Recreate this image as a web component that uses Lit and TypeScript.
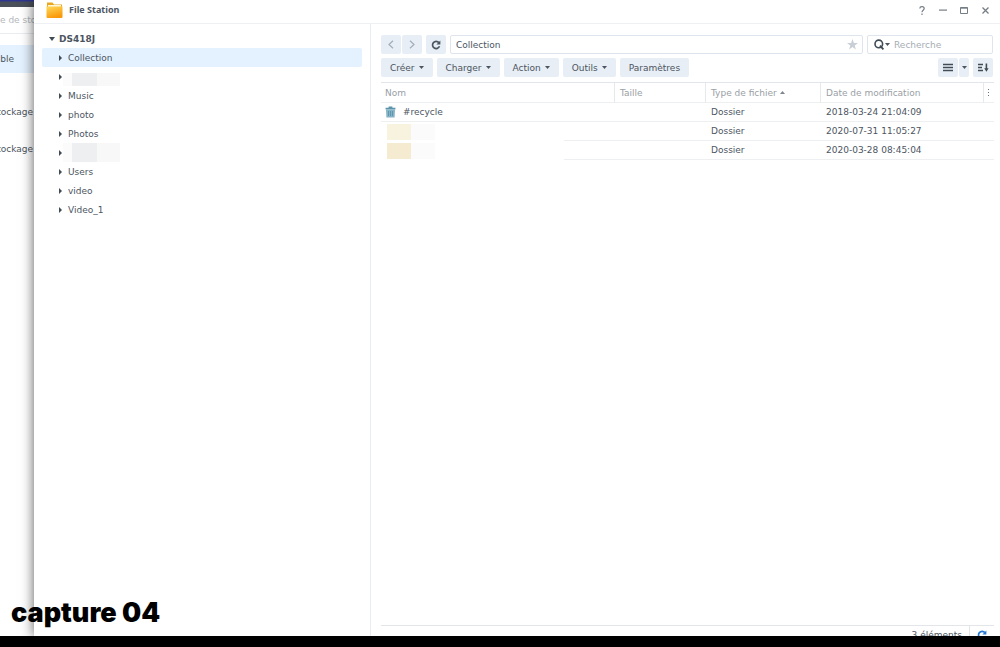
import { LitElement, html, css, svg } from "lit";
import { customElement, property } from "lit/decorators.js";
import { classMap } from "lit/directives/class-map.js";

interface Folder {
  name: string;
  mask?: "short" | "tall";
}

interface Entry {
  name: string;
  type: string;
  date: string;
  mask?: "pale" | "warm";
}

const folders: Folder[] = [
  { name: "Collection" },
  { name: "", mask: "short" },
  { name: "Music" },
  { name: "photo" },
  { name: "Photos" },
  { name: "", mask: "tall" },
  { name: "Users" },
  { name: "video" },
  { name: "Video_1" },
];

const entries: Entry[] = [
  { name: "#recycle", type: "Dossier", date: "2018-03-24 21:04:09" },
  { name: "", type: "Dossier", date: "2020-07-31 11:05:27", mask: "pale" },
  { name: "", type: "Dossier", date: "2020-03-28 08:45:04", mask: "warm" },
];

const menus = ["Créer", "Charger", "Action", "Outils"];

const caretDown = html`<svg class="caret" width="5" height="3" viewBox="0 0 5 3" aria-hidden="true"><path d="M0 0h5L2.5 3z" fill="currentColor" /></svg>`;

const reload = (size: number) => html`<svg width=${size} height=${size} viewBox="0 0 10 10" aria-hidden="true">
  ${svg`<path d="M7.9 2.6A3.6 3.6 0 1 0 8.5 6.3" fill="none" stroke="currentColor" stroke-width="1.7"/><path d="M9.4.6v4H5.4z" fill="currentColor"/>`}
</svg>`;

const base = css`
  * {
    box-sizing: border-box;
  }
  button,
  input {
    font: inherit;
    color: inherit;
    margin: 0;
    padding: 0;
    border: 0;
    background: none;
    outline: 0;
  }
  svg {
    display: block;
    flex: none;
  }
`;

@customElement("folder-tree")
export class FolderTree extends LitElement {
  @property() root = "DS418J";

  static styles = [
    base,
    css`
      :host {
        display: block;
        padding: 5px 8px;
        border-right: 1px solid #e9ecf0;
      }
      .row {
        display: flex;
        align-items: center;
        width: 100%;
        height: 19px;
        padding-left: 17px;
        gap: 6px;
        border-radius: 2px;
        text-align: left;
      }
      .root {
        padding-left: 7px;
        gap: 4px;
        font-weight: bold;
      }
      .selected {
        background: #e4f1fe;
      }
      .mask {
        display: flex;
        width: 57px;
        height: 13px;
        margin-left: -5px;
        padding-left: 9px;
        background: #fbfbfb;
      }
      .mask i {
        width: 25px;
        background: #eeeff0;
      }
      .mask b {
        flex: 1;
        background: #f8f8f8;
      }
      .short {
        align-self: flex-end;
      }
      .tall {
        height: 19px;
      }
    `,
  ];

  render() {
    return html`
      <button class="row root">
        <svg width="6" height="4" viewBox="0 0 6 4"><path d="M0 0h6L3 4z" fill="#414b55" /></svg>
        ${this.root}
      </button>
      ${folders.map(
        (f, i) => html`<button class=${classMap({ row: true, selected: i === 0 })} aria-label=${f.name || "Dossier masqué"}>
          <svg width="3" height="6" viewBox="0 0 3 6"><path d="M0 0v6l3-3z" fill="#414b55" /></svg>
          ${f.mask ? html`<span class="mask ${f.mask}"><i></i><b></b></span>` : f.name}
        </button>`
      )}
    `;
  }
}

@customElement("file-pane")
export class FilePane extends LitElement {
  static styles = [
    base,
    css`
      :host {
        display: flex;
        flex-direction: column;
        min-width: 0;
        padding: 11px 6px 0 10px;
      }
      .bar {
        display: flex;
        height: 19px;
        gap: 4px;
        margin-right: 1px;
      }
      .tools {
        margin: 4px 1px 5px 0;
      }
      .btn {
        display: flex;
        align-items: center;
        justify-content: center;
        gap: 4px;
        padding: 0 9px;
        background: #e8eef5;
        border-radius: 2px;
      }
      .split {
        display: flex;
        gap: 1px;
      }
      .nav,
      .icon {
        width: 20px;
        padding: 0;
      }
      .nav {
        color: #a3adb8;
      }
      .box {
        display: flex;
        align-items: center;
        min-width: 0;
        border: 1px solid #dfe5ec;
        border-radius: 2px;
        padding: 0 4px 0 6px;
      }
      .box input {
        flex: 1;
        min-width: 0;
        height: 17px;
      }
      .path {
        flex: 1;
        padding-left: 5px;
      }
      .search {
        width: 126px;
        gap: 4px;
      }
      .search button {
        display: flex;
        align-items: center;
      }
      input::placeholder {
        color: #a6adb5;
        opacity: 1;
      }
      .menus {
        display: flex;
        flex: 1;
        gap: 4px;
      }
      .drop {
        width: 10px;
        padding: 0;
      }
      table {
        width: 100%;
        table-layout: fixed;
        border-spacing: 0;
        border-top: 1px solid #e2e6ea;
        text-align: left;
      }
      th,
      td {
        height: 19px;
        padding: 0 0 0 4px;
        border-bottom: 1px solid #edeff1;
        white-space: nowrap;
      }
      th {
        height: 20px;
        font-weight: normal;
        color: #9aa0a6;
      }
      th + th {
        border-left: 1px solid #e6e9ec;
        padding-left: 5px;
      }
      td + td {
        padding-left: 6px;
      }
      .size {
        width: 91px;
      }
      .type {
        width: 115px;
      }
      .date {
        width: 163px;
      }
      th.more {
        width: 11px;
        padding-left: 4px;
      }
      .sort,
      .name {
        display: flex;
        align-items: center;
        gap: 3px;
      }
      .name {
        gap: 7px;
      }
      .masked {
        position: relative;
      }
      .mask {
        position: absolute;
        inset: 1px 50px -1px 0;
        padding-left: 6px;
        display: flex;
        background: #fff;
      }
      .mask i {
        width: 24px;
        margin: 1px 0;
      }
      .mask b {
        width: 24px;
        margin: 1px 0;
        background: #fbfbfb;
      }
      .pale i {
        background: #f8f3df;
      }
      .warm i {
        background: #f5ebd0;
      }
      .status {
        display: flex;
        align-items: flex-start;
        justify-content: flex-end;
        height: 11px;
        margin-top: auto;
        border-top: 1px solid #e2e6ea;
        padding-right: 7px;
        gap: 7px;
        line-height: 18px;
        overflow: hidden;
      }
      .status button {
        border-left: 1px solid #e2e6ea;
        padding: 4px 0 4px 7px;
        color: #2478d4;
      }
    `,
  ];

  render() {
    return html`
      <div class="bar">
        <div class="split">
          <button class="btn nav" aria-label="Précédent">
            <svg width="6" height="9" viewBox="0 0 6 9"><path d="M5 .7 1 4.5l4 3.8" fill="none" stroke="currentColor" stroke-width="1.2" /></svg>
          </button>
          <button class="btn nav" aria-label="Suivant">
            <svg width="6" height="9" viewBox="0 0 6 9"><path d="m1 .7 4 3.8-4 3.8" fill="none" stroke="currentColor" stroke-width="1.2" /></svg>
          </button>
        </div>
        <button class="btn icon" aria-label="Actualiser">${reload(10)}</button>
        <label class="box path">
          <input aria-label="Chemin" value="Collection" />
          <svg width="11" height="11" viewBox="0 0 11 11"><path d="m5.5 0 1.4 3.9 4.1.1-3.3 2.5 1.2 4-3.4-2.4-3.4 2.4 1.2-4L0 4l4.1-.1z" fill="#c9cfd6" /></svg>
        </label>
        <div class="box search">
          <button aria-label="Options de recherche">
            <svg width="11" height="11" viewBox="0 0 11 11"><circle cx="4.8" cy="4.9" r="3.8" fill="none" stroke="#414b55" stroke-width="1.6" /><path d="m6 6.6 3.4 3.8" stroke="#414b55" stroke-width="1.8" /></svg>
            ${caretDown}
          </button>
          <input aria-label="Recherche" placeholder="Recherche" />
        </div>
      </div>
      <div class="bar tools">
        <div class="menus">
          ${menus.map((m) => html`<button class="btn">${m}${caretDown}</button>`)}
          <button class="btn">Paramètres</button>
        </div>
        <div class="split">
          <button class="btn icon" aria-label="Affichage en liste">
            <svg width="10" height="9" viewBox="0 0 10 9"><path d="M0 1.5h10M0 4.5h10M0 7.5h10" stroke="#414b55" stroke-width="1.3" /></svg>
          </button>
          <button class="btn drop" aria-label="Modes d'affichage">${caretDown}</button>
        </div>
        <button class="btn icon" aria-label="Trier">
          <svg width="12" height="9" viewBox="0 0 12 9"><path d="M1 1.5h5M1 4.5h4M1 7.5h5" stroke="#414b55" stroke-width="1.3" /><path d="M9.4 .5v6" stroke="#414b55" stroke-width="1.6" /><path d="M7.2 5.2h4.4L9.4 8.8z" fill="#414b55" /></svg>
        </button>
      </div>
      <table>
        <thead>
          <tr>
            <th>Nom</th>
            <th class="size">Taille</th>
            <th class="type">
              <span class="sort">Type de fichier<svg width="5" height="3" viewBox="0 0 5 3"><path d="M0 3h5L2.5 0z" fill="#7d858d" /></svg></span>
            </th>
            <th class="date">Date de modification</th>
            <th class="more">
              <svg width="2" height="9" viewBox="0 0 2 9"><path d="M0 1h1v1H0zM0 4h1v1H0zM0 7h1v1H0z" fill="#6b747d" /></svg>
            </th>
          </tr>
        </thead>
        <tbody>
          ${entries.map(
            (e) => html`<tr>
              <td class=${classMap({ masked: !!e.mask })}>
                ${e.mask
                  ? html`<span class="mask ${e.mask}"><i></i><b></b></span>`
                  : html`<span class="name">
                      <svg width="11" height="12" viewBox="0 0 11 12">
                        <path d="M.6 1.7h3V.5h3.8v1.2h3v1.8H.6z" fill="#5b93ab" />
                        <path d="M1 3.5h9l-.4 8H1.4z" fill="#86b4c7" />
                        <path d="M3.5 5v5M5.5 5v5M7.5 5v5" stroke="#5b93ab" stroke-width=".9" />
                      </svg>
                      ${e.name}</span
                    >`}
              </td>
              <td></td>
              <td>${e.type}</td>
              <td>${e.date}</td>
              <td></td>
            </tr>`
          )}
        </tbody>
      </table>
      <div class="status">
        <span>${entries.length} éléments</span>
        <button aria-label="Actualiser la liste">${reload(10)}</button>
      </div>
    `;
  }
}

@customElement("app-root")
export class AppRoot extends LitElement {
  static styles = [
    base,
    css`
      :host {
        display: flex;
        flex-direction: column;
        height: 100vh;
        font: 9px/12px "DejaVu Sans", Verdana, sans-serif;
        color: #4c555f;
        background: #000;
      }
      .stage {
        position: relative;
        display: flex;
        flex: 1;
        min-height: 0;
        margin-bottom: 11px;
        overflow: hidden;
        background: #fff;
      }
      .behind {
        display: flex;
        flex-direction: column;
        width: 34px;
        overflow: hidden;
        white-space: nowrap;
      }
      .desk {
        height: 7px;
        background: linear-gradient(#2e3690 1px, #4a5059 2px);
      }
      .behind p {
        display: flex;
        align-items: center;
        justify-content: flex-end;
        height: 37px;
        margin: 0;
        padding-right: 1px;
      }
      .behind .heading {
        height: 27px;
        padding: 0;
        color: #b4b8bc;
        border-bottom: 1px solid #e9ecf0;
        justify-content: flex-start;
      }
      .behind .current {
        height: 28px;
        margin: 11px 0 20px;
        padding-right: 20px;
        background: #e4f1fe;
      }
      .window {
        display: flex;
        flex-direction: column;
        flex: 1;
        min-width: 0;
        background: #fff;
        box-shadow: 0 0 12px rgba(0, 0, 0, 0.65);
      }
      header {
        display: flex;
        align-items: center;
        height: 24px;
        padding: 0 7px 3px 12px;
        gap: 5px;
        border-bottom: 1px solid #eef0f3;
      }
      h1 {
        flex: 1;
        margin: 0;
        padding-left: 1px;
        font: bold 9px/12px "Noto Sans", sans-serif;
      }
      header button {
        display: flex;
        align-items: center;
        justify-content: center;
        width: 16px;
        height: 16px;
        color: #757d85;
      }
      .content {
        display: grid;
        grid-template-columns: 337px 1fr;
        flex: 1;
        min-height: 0;
      }
      .caption {
        position: absolute;
        left: 11px;
        bottom: 7px;
        margin: 0;
        font: 900 27px/32px Inter, sans-serif;
        color: #000;
      }
    `,
  ];

  render() {
    return html`
      <main class="stage">
        <div class="behind">
          <div class="desk"></div>
          <p class="heading">e de stockage</p>
          <p class="current">able</p>
          <p>stockage</p>
          <p>stockage</p>
        </div>
        <section class="window">
          <header>
            <svg width="17" height="16" viewBox="0 0 17 16">
              <defs>
                <linearGradient id="f" x1="0" y1="0" x2="0.4" y2="1">
                  <stop offset="0" stop-color="#ffd95a" />
                  <stop offset="1" stop-color="#f99a0a" />
                </linearGradient>
              </defs>
              <path d="M1 .5h5.5l1.5 2h8V8H1z" fill="#e9a820" />
              <path d="M2 3h13v3H2z" fill="#fff6d5" />
              <path d="M.5 4.5h16V15a1 1 0 0 1-1 1h-14a1 1 0 0 1-1-1z" fill="url(#f)" />
            </svg>
            <h1>File Station</h1>
            <button aria-label="Aide"><svg width="6" height="9" viewBox="0 0 6 9"><path d="M.8 2.4C.9 0 5.2.1 5.2 2.5 5.2 4.2 3 4.2 3 6.2M3 7.4V9" fill="none" stroke="currentColor" stroke-width="1.2" /></svg></button>
            <button aria-label="Réduire"><svg width="8" height="2" viewBox="0 0 8 2"><path d="M0 0.5h8v1.2H0z" fill="currentColor" /></svg></button>
            <button aria-label="Agrandir"><svg width="8" height="7" viewBox="0 0 8 7"><path d="M.5.5h7v6h-7zM0 1.2h8" fill="none" stroke="currentColor" /></svg></button>
            <button aria-label="Fermer"><svg width="7" height="7" viewBox="0 0 7 7"><path d="m.5.5 6 6m0-6-6 6" stroke="currentColor" stroke-width="1.3" /></svg></button>
          </header>
          <div class="content">
            <folder-tree></folder-tree>
            <file-pane></file-pane>
          </div>
        </section>
        <p class="caption">capture 04</p>
      </main>
    `;
  }
}
